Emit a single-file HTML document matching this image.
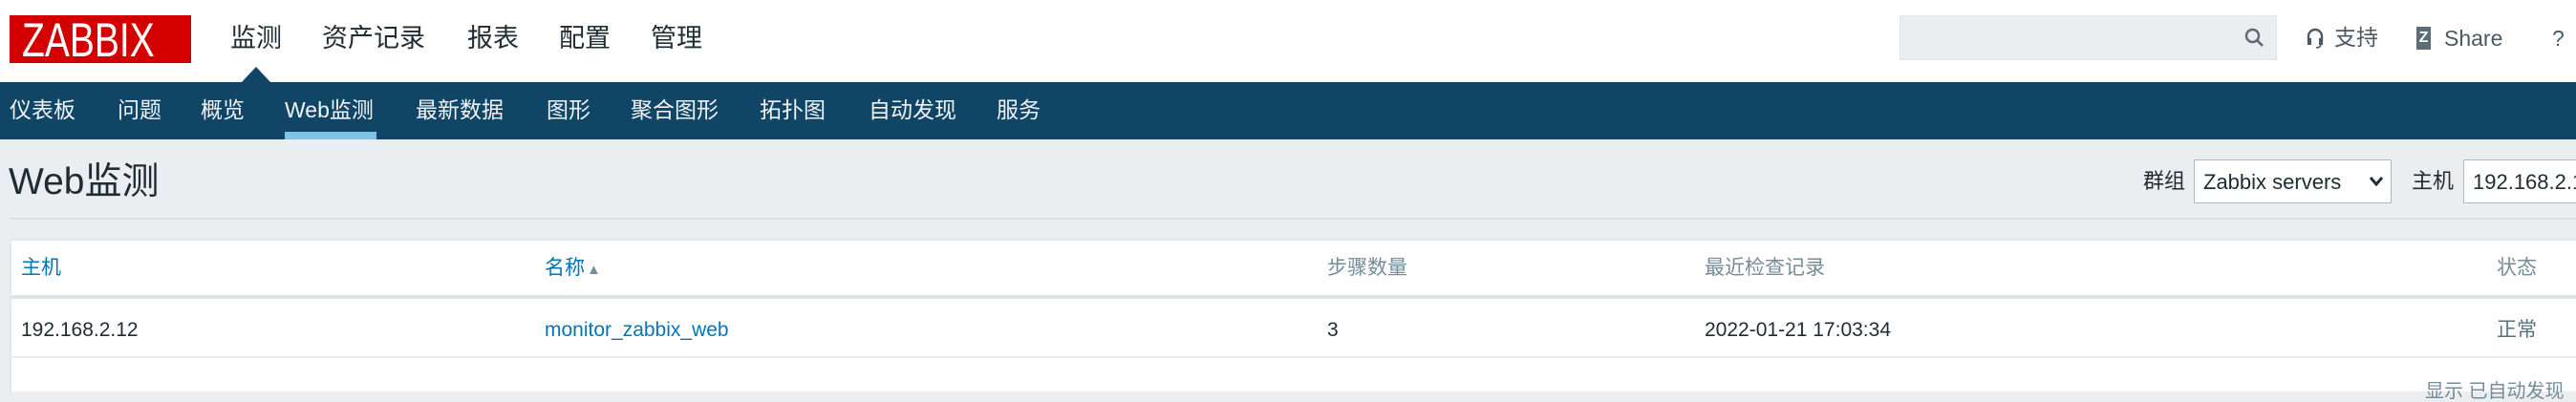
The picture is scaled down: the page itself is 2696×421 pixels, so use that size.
<!DOCTYPE html>
<html><head><meta charset="utf-8"><style>
*{margin:0;padding:0;box-sizing:border-box;line-height:1}
body{width:2696px;height:410px;overflow:hidden;background:#ebeef0;font-family:"Liberation Sans","Noto Sans CJK SC",sans-serif;position:relative;color:#1f2c33}
.a{position:absolute;white-space:nowrap}
#hdr{position:absolute;left:0;top:0;width:2696px;height:86px;background:#fff}
#nav{position:absolute;left:0;top:86px;width:2696px;height:60px;background:#114566}
.tm{font-size:27px;top:27px;color:#1f2c33}
.sn{font-size:23px;top:104px;color:#f0f3f5}
.th{font-size:21px;top:270px;color:#768d99}
.td{font-size:21px;top:335px;color:#1f2c33}
.lk{color:#0275b8}
</style></head><body>
<div id="hdr"></div>
<div id="nav"></div>
<div class="a" style="left:10px;top:16px;width:190px;height:50px;background:#d40000;overflow:hidden"><div style="color:#fff;font-size:50px;line-height:50px;transform:scaleX(0.78);transform-origin:0 0;position:absolute;left:13px;top:1px">ZABBIX</div></div>
<div class="a tm" style="left:241px">监测</div>
<div class="a tm" style="left:337px">资产记录</div>
<div class="a tm" style="left:489px">报表</div>
<div class="a tm" style="left:585px">配置</div>
<div class="a tm" style="left:681px">管理</div>
<div class="a" style="left:253px;top:70px;width:0;height:0;border-left:15px solid transparent;border-right:15px solid transparent;border-bottom:16px solid #114566"></div>
<div class="a" style="left:1988px;top:16px;width:395px;height:47px;background:#ebedef;border:1px solid #dfe4e7"></div>
<svg class="a" style="left:2348px;top:28px" width="24" height="24" viewBox="0 0 24 24"><circle cx="9.5" cy="9.5" r="6.5" fill="none" stroke="#5a6a72" stroke-width="2.4"/><path d="M14 14l6 6" stroke="#5a6a72" stroke-width="2.6"/></svg>
<svg class="a" style="left:2413px;top:28px" width="20" height="24" viewBox="0 0 20 24"><path d="M3 15V10a7 7 0 0 1 14 0v5" fill="none" stroke="#4a5a62" stroke-width="2.4"/><rect x="2" y="12" width="4" height="7" fill="#4a5a62"/><rect x="14" y="12" width="4" height="7" fill="#4a5a62"/><path d="M16 19q-1 3-5 3" fill="none" stroke="#4a5a62" stroke-width="1.6"/></svg>
<div class="a" style="left:2443px;top:28px;font-size:23px;color:#4a5a62">支持</div>
<div class="a" style="left:2529px;top:28px;width:15px;height:24px;background:#5d6d75;color:#fff;font-size:16px;font-weight:bold;line-height:24px;text-align:center">Z</div>
<div class="a" style="left:2558px;top:29px;font-size:23px;color:#4a5a62">Share</div>
<div class="a" style="left:2671px;top:29px;font-size:23px;color:#4a5a62">?</div>
<div class="a sn" style="left:10px">仪表板</div>
<div class="a sn" style="left:123px">问题</div>
<div class="a sn" style="left:210px">概览</div>
<div class="a sn" style="left:298px">Web监测</div>
<div class="a sn" style="left:435px">最新数据</div>
<div class="a sn" style="left:572px">图形</div>
<div class="a sn" style="left:660px">聚合图形</div>
<div class="a sn" style="left:795px">拓扑图</div>
<div class="a sn" style="left:909px">自动发现</div>
<div class="a sn" style="left:1043px">服务</div>
<div class="a" style="left:298px;top:138px;width:96px;height:8px;background:#7fc4e8"></div>
<div class="a" style="left:9px;top:171px;font-size:39px;color:#1f2c33">Web监测</div>
<div class="a" style="left:2243px;top:179px;font-size:22px">群组</div>
<div class="a" style="left:2296px;top:167px;width:207px;height:46px;background:#fff;border:1px solid #acbbc2;font-size:22px;padding:12px 0 0 9px">Zabbix servers</div>
<svg class="a" style="left:2479px;top:183px" width="16" height="14" viewBox="0 0 16 14"><path d="M2 3l6 7 6-7" fill="none" stroke="#1f2c33" stroke-width="3"/></svg>
<div class="a" style="left:2524px;top:179px;font-size:22px">主机</div>
<div class="a" style="left:2578px;top:167px;width:140px;height:46px;background:#fff;border:1px solid #acbbc2;font-size:22px;padding:12px 0 0 9px">192.168.2.12</div>
<div class="a" style="left:10px;top:228px;width:2686px;height:2px;background:#dde1e4"></div>
<div class="a" style="left:10px;top:250px;width:2686px;height:160px;background:#fff;border-left:2px solid #e4e8ea;border-top:2px solid #e4e8ea"></div>
<div class="a" style="left:12px;top:309px;width:2684px;height:4px;background:#dfe4e7"></div>
<div class="a" style="left:12px;top:373px;width:2684px;height:2px;background:#ebeef0"></div>
<div class="a th lk" style="left:22px">主机</div>
<div class="a th lk" style="left:570px">名称<span style="color:#768d99;font-size:15px;margin-left:2px">▲</span></div>
<div class="a th" style="left:1389px">步骤数量</div>
<div class="a th" style="left:1784px">最近检查记录</div>
<div class="a th" style="left:2613px">状态</div>
<div class="a td" style="left:22px">192.168.2.12</div>
<div class="a td lk" style="left:570px">monitor_zabbix_web</div>
<div class="a td" style="left:1389px">3</div>
<div class="a td" style="left:1784px">2022-01-21 17:03:34</div>
<div class="a td" style="left:2613px;color:#59717c">正常</div>
<div class="a" style="left:2538px;top:400px;font-size:20px;color:#768d99">显示 已自动发现</div>
</body></html>
